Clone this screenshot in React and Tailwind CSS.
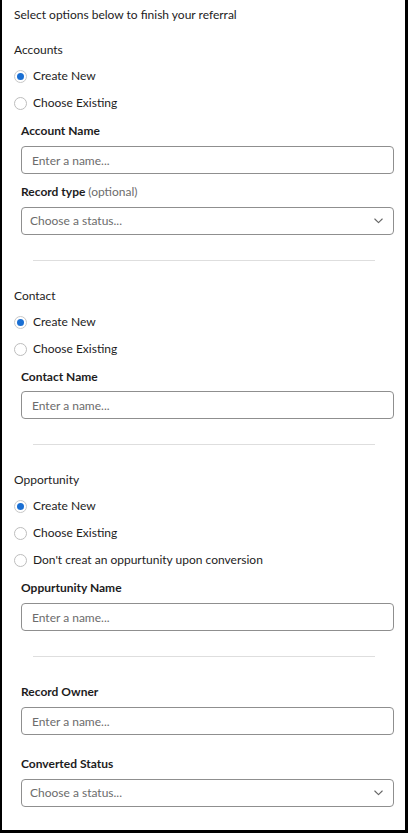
const Radio = ({ checked, label, className }) => (
  <div className={`flex items-center h-5 ${className}`}>
    <span
      className={`w-[13px] h-[13px] rounded-full border flex items-center justify-center bg-white ${
        checked ? "border-[#c8c8c8]" : "border-[#bdbdbd]"
      }`}
    >
      {checked && <span className="w-[7px] h-[7px] rounded-full bg-[#1a6fd3]" />}
    </span>
    <span className="ml-[6px]">{label}</span>
  </div>
);

const Label = ({ children, className }) => (
  <div className={`h-5 leading-5 ml-[7px] font-bold text-[#1d1c1d] ${className}`}>{children}</div>
);

const TextInput = ({ className }) => (
  <input
    type="text"
    placeholder="Enter a name..."
    className={`block ml-[7px] w-[373px] h-[28px] rounded-[4px] border border-[#8f8f8f] px-[10px] text-[12px] placeholder:text-[#6c6c6c] outline-none ${className}`}
  />
);

const Select = ({ className }) => (
  <div
    className={`ml-[7px] w-[373px] h-[28px] rounded-[4px] border border-[#8f8f8f] pl-[8px] pr-[10px] flex items-center justify-between text-[#6c6c6c] ${className}`}
  >
    <span>Choose a status...</span>
    <svg width="9" height="6" viewBox="0 0 9 6" fill="none">
      <path d="M0.8 1l3.7 3.6L8.2 1" stroke="#666" strokeWidth="1.1" strokeLinecap="round" strokeLinejoin="round" />
    </svg>
  </div>
);

const Divider = ({ className }) => <div className={`ml-[19px] w-[342px] h-px bg-[#dedede] ${className}`} />;

const App = () => {
  return (
    <div
      className="w-[408px] h-[833px] bg-white border-l-2 border-r-[3px] border-b-[3px] border-black text-[12px] text-[#1d1c1d] overflow-hidden"
      style={{ fontFamily: "Lato, 'Noto Sans', sans-serif" }}
    >
      <div className="pl-3 pt-[5px] leading-5">
        <div className="h-5">Select options below to finish your referral</div>

        {/* Accounts */}
        <div className="h-5 mt-[15px]">Accounts</div>
        <Radio checked label="Create New" className="mt-[6px]" />
        <Radio label="Choose Existing" className="mt-[7px]" />
        <Label className="mt-[8px]">Account Name</Label>
        <TextInput className="mt-[5px]" />
        <Label className="mt-[8px]">
          Record type <span className="font-normal text-[#6c6c6c]">(optional)</span>
        </Label>
        <Select className="mt-[5px]" />
        <Divider className="mt-[25px]" />

        {/* Contact */}
        <div className="h-5 mt-[25px]">Contact</div>
        <Radio checked label="Create New" className="mt-[6px]" />
        <Radio label="Choose Existing" className="mt-[7px]" />
        <Label className="mt-[8px]">Contact Name</Label>
        <TextInput className="mt-[4px]" />
        <Divider className="mt-[25px]" />

        {/* Opportunity */}
        <div className="h-5 mt-[25px]">Opportunity</div>
        <Radio checked label="Create New" className="mt-[6px]" />
        <Radio label="Choose Existing" className="mt-[7px]" />
        <Radio label="Don't creat an oppurtunity upon conversion" className="mt-[7px]" />
        <Label className="mt-[8px]">Oppurtunity Name</Label>
        <TextInput className="mt-[5px]" />
        <Divider className="mt-[25px]" />

        <Label className="mt-[25px]">Record Owner</Label>
        <TextInput className="mt-[5px]" />
        <Label className="mt-[19px]">Converted Status</Label>
        <Select className="mt-[5px]" />
      </div>
    </div>
  );
};

export default App;
